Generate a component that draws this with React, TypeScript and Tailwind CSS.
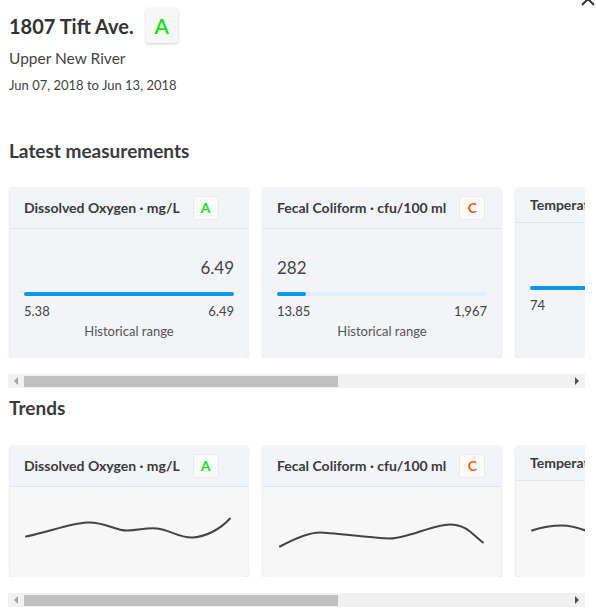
import React from "react";

type Grade = "A" | "C";

interface Measurement {
    title: string;
    grade?: Grade;
    value?: string;
    valueAlign?: "left" | "right";
    fill: number;
    min: string;
    max?: string;
    showRange?: boolean;
}

const measurements: Measurement[] = [
    { title: "Dissolved Oxygen · mg/L", grade: "A", value: "6.49", valueAlign: "right", fill: 100, min: "5.38", max: "6.49", showRange: true },
    { title: "Fecal Coliform · cfu/100 ml", grade: "C", value: "282", valueAlign: "left", fill: 14, min: "13.85", max: "1,967", showRange: true },
    { title: "Temperature · °F", fill: 100, min: "74" },
];

interface Trend {
    title: string;
    grade?: Grade;
    path: string;
}

const trends: Trend[] = [
    {
        title: "Dissolved Oxygen · mg/L",
        grade: "A",
        path: "M16 49 C 40 44, 60 36, 77 35 S 105 43, 117 43 S 135 40, 147 41 S 170 51, 183 50 S 210 42, 220 31",
    },
    {
        title: "Fecal Coliform · cfu/100 ml",
        grade: "C",
        path: "M17 59 C 30 52, 45 45, 57 45 S 110 51, 127 51 S 170 37, 187 37 S 210 48, 220 55",
    },
    {
        title: "Temperature · °F",
        path: "M16 46 C 28 42, 38 41, 46 41 S 62 43, 72 47",
    },
];

function GradeBadge({ grade }: { grade: Grade }) {
    const color = grade === "A" ? "text-[#14e01e]" : "text-[#ff5a0a]";
    return (
        <span
            className={
                "flex h-[24px] w-[26px] shrink-0 items-center justify-center rounded-[3px] border border-[#ebebeb] bg-[#fbfbfb] text-[14px] font-bold " +
                color
            }
        >
            {grade}
        </span>
    );
}

function CardHeader({ title, grade }: { title: string; grade?: Grade }) {
    return (
        <div
            className={
                "flex items-center gap-[13px] whitespace-nowrap border-b border-[#e4e5ea] bg-[#f3f4f8] px-[14px] " +
                (grade ? "h-[42px]" : "h-[36px]")
            }
        >
            <span className="text-[14px] font-bold text-[#3b3b3b]">{title}</span>
            {grade && <GradeBadge grade={grade} />}
        </div>
    );
}

function Scrollbar() {
    return (
        <div className="mx-[8px] flex h-[14px] w-[577px] items-center bg-[#f1f1f1]">
            <div className="flex w-[16px] justify-center">
                <span className="h-0 w-0 border-y-[4px] border-r-[4px] border-y-transparent border-r-[#a3a3a3]" />
            </div>
            <div className="h-[11px] w-[314px] bg-[#c1c1c1]" />
            <div className="flex-1" />
            <div className="flex w-[16px] justify-center">
                <span className="h-0 w-0 border-y-[4px] border-l-[4px] border-y-transparent border-l-[#505050]" />
            </div>
        </div>
    );
}

function MeasurementCard({ m }: { m: Measurement }) {
    return (
        <div className="flex w-[238px] shrink-0 flex-col overflow-hidden rounded-[4px] bg-[#f3f4f8] shadow-[0_1px_3px_rgba(0,0,0,0.18)]">
            <CardHeader title={m.title} grade={m.grade} />
            <div className="px-[14px] pt-[28px]">
                <div
                    className={
                        "h-[22px] text-[17px] leading-[22px] text-[#444] " +
                        (m.valueAlign === "right" ? "text-right" : "text-left")
                    }
                >
                    {m.value}
                </div>
                <div className="mt-[13px] h-[4px] w-full rounded-full bg-[#dff1fc]">
                    <div className="h-[4px] rounded-full bg-[#0a98ee]" style={{ width: m.fill + "%" }} />
                </div>
                <div className="mt-[7px] flex justify-between text-[13px] leading-[16px] text-[#444]">
                    <span>{m.min}</span>
                    <span>{m.max}</span>
                </div>
                {m.showRange && (
                    <div className="mt-[4px] text-center text-[13px] leading-[16px] text-[#555]">Historical range</div>
                )}
            </div>
        </div>
    );
}

function TrendCard({ t }: { t: Trend }) {
    return (
        <div className="flex w-[238px] shrink-0 flex-col overflow-hidden rounded-[4px] bg-[#f7f7f7] shadow-[0_1px_3px_rgba(0,0,0,0.18)]">
            <CardHeader title={t.title} grade={t.grade} />
            <svg className="block flex-1" width="238" height="89" viewBox="0 0 238 89">
                <path d={t.path} fill="none" stroke="#444" strokeWidth="2" strokeLinecap="round" />
            </svg>
        </div>
    );
}

export default function App() {
    return (
        <div className="relative h-[615px] w-[596px] overflow-hidden bg-white font-['Lato',sans-serif] text-[#3a3a3a]">
            {/* close button, mostly scrolled off the top */}
            <svg className="absolute right-[0px] top-[-9px]" width="16" height="16" viewBox="0 0 16 16">
                <path d="M2 2 L14 14 M14 2 L2 14" stroke="#333" strokeWidth="2" />
            </svg>

            <div className="pl-[9px] pt-[8px]">
                <div className="flex items-center gap-[12px]">
                    <h1 className="text-[20px] font-bold leading-[28px] text-[#333]">1807 Tift Ave.</h1>
                    <span className="flex h-[35px] w-[32px] items-center justify-center rounded-[3px] bg-[#f7f7f7] text-[21px] font-semibold text-[#14e01e] shadow-[0_1px_3px_rgba(0,0,0,0.2)]">
                        A
                    </span>
                </div>
                <p className="mt-[5px] text-[15.5px] leading-[20px] text-[#444]">Upper New River</p>
                <p className="mt-[8px] text-[13px] leading-[18px] text-[#444]">Jun 07, 2018 to Jun 13, 2018</p>
            </div>

            <h2 className="mt-[45px] pl-[9px] text-[19px] font-bold leading-[24px] text-[#3a3a3a]">Latest measurements</h2>
            <div className="ml-[8px] mt-[24px] w-[577px] overflow-hidden">
                <div className="flex h-[171px] gap-[15px] pl-[2px]">
                    {measurements.map((m) => (
                        <MeasurementCard key={m.title} m={m} />
                    ))}
                </div>
            </div>
            <div className="mt-[16px]">
                <Scrollbar />
            </div>

            <h2 className="mt-[8px] pl-[9px] text-[19px] font-bold leading-[24px] text-[#3a3a3a]">Trends</h2>
            <div className="ml-[8px] mt-[25px] w-[577px] overflow-hidden">
                <div className="flex h-[132px] gap-[15px] pl-[2px]">
                    {trends.map((t) => (
                        <TrendCard key={t.title} t={t} />
                    ))}
                </div>
            </div>
            <div className="mt-[16px]">
                <Scrollbar />
            </div>
        </div>
    );
}
